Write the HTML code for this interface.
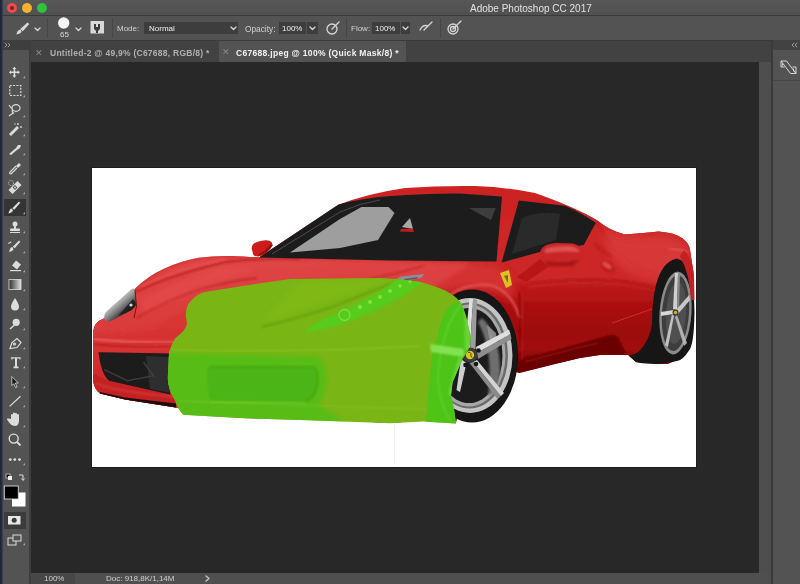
<!DOCTYPE html>
<html><head><meta charset="utf-8">
<style>
*{margin:0;padding:0;box-sizing:border-box}
html,body{width:800px;height:584px;overflow:hidden;background:#282828;font-family:"Liberation Sans",sans-serif}
.a{position:absolute}
.t{position:absolute;white-space:nowrap;line-height:1;will-change:transform}
</style></head><body>
<!-- title bar -->
<div class="a" style="left:0;top:0;width:800px;height:15px;background:linear-gradient(#575757,#505050)"></div>
<div class="a" style="left:0;top:15px;width:800px;height:1px;background:#3a3a3a"></div>
<div class="a" style="left:7px;top:3px;width:10px;height:10px;border-radius:50%;background:#ee4a52"></div>
<div class="a" style="left:22px;top:3px;width:10px;height:10px;border-radius:50%;background:#f2b230"></div>
<div class="a" style="left:37px;top:3px;width:10px;height:10px;border-radius:50%;background:#2ec23f"></div>
<div class="a" style="left:10px;top:6px;width:4px;height:4px;border-radius:50%;background:#8a1a20"></div>
<div class="t" style="left:470px;top:4px;font-size:10px;color:#e2e2e2">Adobe Photoshop CC 2017</div>
<!-- options bar -->
<div class="a" style="left:0;top:16px;width:800px;height:24px;background:#535353"></div>
<div class="a" style="left:47px;top:18px;width:1px;height:20px;background:#464646"></div>
<div class="a" style="left:112px;top:18px;width:1px;height:20px;background:#464646"></div>
<div class="a" style="left:346px;top:18px;width:1px;height:20px;background:#464646"></div>
<div class="a" style="left:440px;top:18px;width:1px;height:20px;background:#464646"></div>
<div class="a" style="left:144px;top:22px;width:94px;height:12px;background:#3d3d3d"></div>
<div class="a" style="left:279px;top:22px;width:39px;height:12px;background:#3d3d3d"></div>
<div class="a" style="left:306px;top:22px;width:1px;height:12px;background:#535353"></div>
<div class="a" style="left:372px;top:22px;width:38px;height:12px;background:#3d3d3d"></div>
<div class="a" style="left:400px;top:22px;width:1px;height:12px;background:#535353"></div>
<div class="t" style="left:117px;top:25px;font-size:8px;color:#d0d0d0">Mode:</div>
<div class="t" style="left:149px;top:25px;font-size:8px;color:#f0f0f0">Normal</div>
<div class="t" style="left:245px;top:25px;font-size:8.3px;color:#d0d0d0">Opacity:</div>
<div class="t" style="left:282px;top:25px;font-size:8px;color:#f0f0f0">100%</div>
<div class="t" style="left:351px;top:25px;font-size:8px;color:#d0d0d0">Flow:</div>
<div class="t" style="left:375px;top:25px;font-size:8px;color:#f0f0f0">100%</div>
<div class="t" style="left:59.5px;top:31px;font-size:8px;color:#d8d8d8">65</div>
<!-- tab bar -->
<div class="a" style="left:0;top:40px;width:800px;height:22px;background:#424242"></div>
<div class="a" style="left:0;top:40px;width:800px;height:1px;background:#3a3a3a"></div>
<div class="a" style="left:219px;top:41px;width:187px;height:21px;background:#535353"></div>
<div class="t" style="left:35px;top:49px;font-size:9px;color:#8a8a8a">✕</div>
<div class="t" style="left:50px;top:49px;font-size:8.5px;letter-spacing:0.25px;color:#b0b0b0;font-weight:bold">Untitled-2 @ 49,9% (C67688, RGB/8) *</div>
<div class="t" style="left:222px;top:48px;font-size:9px;color:#8a8a8a">✕</div>
<div class="t" style="left:236px;top:48.5px;font-size:8.5px;letter-spacing:0.3px;color:#f2f2f2;font-weight:bold">C67688.jpeg @ 100% (Quick Mask/8) *</div>
<!-- toolbar -->
<div class="a" style="left:0;top:40px;width:31px;height:544px;background:#3e3e3e"></div>
<div class="a" style="left:1px;top:50px;width:28px;height:534px;background:#535353"></div>
<div class="a" style="left:0;top:0;width:3px;height:584px;background:linear-gradient(90deg,#1c2234,#2a3040 60%,#404652)"></div>
<div class="a" style="left:4px;top:199px;width:22px;height:17px;background:#343434"></div>
<div class="a" style="left:4px;top:512px;width:22px;height:17px;background:#3c3c3c"></div>
<!-- canvas -->
<div class="a" style="left:31px;top:62px;width:728px;height:511px;background:#282828"></div>
<div class="a" style="left:759px;top:62px;width:12px;height:511px;background:#4e4e4e"></div>
<div class="a" style="left:771px;top:40px;width:2px;height:544px;background:#3a3a3a"></div>
<div class="a" style="left:773px;top:40px;width:27px;height:544px;background:#535353"></div>
<div class="a" style="left:773px;top:40px;width:27px;height:10px;background:#424242"></div>
<div class="a" style="left:773px;top:80px;width:27px;height:1px;background:#464646"></div>
<!-- status bar -->
<div class="a" style="left:31px;top:573px;width:740px;height:11px;background:#4f4f4f"></div>
<div class="a" style="left:31px;top:573px;width:44px;height:11px;background:#474747"></div>
<div class="t" style="left:44px;top:575px;font-size:8px;color:#d0d0d0">100%</div>
<div class="t" style="left:106px;top:575px;font-size:8px;color:#d0d0d0">Doc: 918,8K/1,14M</div>
<!-- image frame -->
<div class="a" style="left:91px;top:167px;width:606px;height:301px;background:#1c1c1c"></div>
<svg class="a" style="left:0;top:0" width="800" height="584" viewBox="0 0 800 584">
<g fill="none" stroke="#d6d6d6" stroke-width="1.3" stroke-linecap="round" stroke-linejoin="round">
 <!-- options chevrons -->
 <path d="M35 28l2.5 2.5l2.5-2.5M76 28l2.5 2.5l2.5-2.5M231 27l2.5 2.5l2.5-2.5M310 27l2.5 2.5l2.5-2.5M403 27l2.5 2.5l2.5-2.5"/>
 <!-- airbrush icons -->
 <circle cx="332" cy="29" r="5"/><path d="M332 29l7-7"/>
 <path d="M420 30q3-6 8-4M424 30l8-8"/>
 <circle cx="453" cy="29" r="5"/><circle cx="453" cy="29" r="2.5"/><path d="M453 29l8-8"/>
 <!-- tabs >> -->
 <path d="M5 43l2 2l-2 2M8 43l2 2l-2 2M794 43l-2 2l2 2M797 43l-2 2l2 2" stroke="#9a9a9a" stroke-width="1"/>
 <!-- status > -->
 <path d="M206 576l3 2.5l-3 2.5" stroke="#c8c8c8"/>
</g>
<g fill="#d8d8d8">
 <!-- options brush icon -->
 <path d="M27.5 22.5l1.8 1.6l-6.5 7.2l-2.6-2.2z"/><path d="M20.5 29.5q-2.5 0-3.3 2.5l-.8 2.6q3.2-.2 5.3-2.6z"/>
 <circle cx="63.7" cy="23" r="5.7" fill="#f4f4f4"/>
 <rect x="90.5" y="21" width="13.5" height="12.5"/>
</g>
<g fill="#3c3c3c"><path d="M94 24h2v3h2v-3h2v5l-2 2v2h-2v-2l-2-2z"/></g>
<!-- toolbar icons -->
<g fill="#dcdcdc" stroke="none">
 <!-- move -->
 <path d="M14.4 66.8l2 2.2h-1.2v2.5h2.5v-1.2l2.2 2l-2.2 2v-1.2h-2.5v2.5h1.2l-2 2.2l-2-2.2h1.2v-2.5h-2.5v1.2l-2.2-2l2.2-2v1.2h2.5v-2.5h-1.2z"/>
 <!-- wand -->
 <path d="M9 134l8-8l2 2l-8 8z"/><circle cx="18" cy="124" r="0.9"/><circle cx="21" cy="127" r="0.9"/><circle cx="15" cy="124" r="0.7"/>
 <!-- pipette 1 -->
 <path d="M9 154l7-6l2-3l3 0l-1 3l-3 2l-6 5z"/>
 <!-- eyedropper -->
 <path d="M16 166l3-3l2 2l-3 3z"/>
 <!-- bandage -->
 <path d="M8.5 190l9-9l4 4l-9 9z"/><path d="M12.6 187.5l2.4-2.4l2.4 2.4l-2.4 2.4z" fill="#535353"/><circle cx="15" cy="187.5" r="0.9"/>
 <!-- brush active -->
 <path d="M19 201.5l1.3 1.2l-6 7l-2-1.5z"/><path d="M12 208.5q-2 0-2.5 2l-1.2 3q3-.5 4.7-2.5z"/>
 <!-- stamp -->
 <circle cx="15" cy="224" r="2.5"/><rect x="14" y="225" width="2" height="4"/><rect x="10" y="228.5" width="10" height="2.5" rx="1"/><rect x="10" y="232" width="10" height="1"/>
 <!-- history brush -->
 <path d="M19 240.5l1.3 1.2l-5.5 6.5l-2-1.5z"/><path d="M12.5 247q-2 0-2.5 2l-1 3q3-.5 4.5-2.5z"/><path d="M8 243l3-1.5l.5 1l-3 1.5z"/>
 <!-- eraser -->
 <path d="M16 260.5l5 4l-4 5l-5-4z"/><rect x="10" y="270" width="11" height="1.2"/>
 <!-- drop -->
 <path d="M15 298q-4 6-4 8.5a4 4 0 0 0 8 0q0-2.5-4-8.5z"/>
 <!-- dodge -->
 <circle cx="16.2" cy="322.3" r="3.6"/><path d="M9.5 328.5l4.5-4l1 1l-4.5 4z"/>
 <!-- T -->
 <path d="M11 357.2h9.5v2.2h-1v-1h-2.5v8h1.5v1.8h-5v-1.8h1.5v-8h-2.5v1h-1z"/>
 <!-- arrow -->
 <path d="M11.8 376.5l6.5 6.5h-3l1.8 4l-1.5.7l-1.8-4l-2 2z" fill="#1a1a1a" stroke="#dcdcdc" stroke-width="0.8"/>
 <!-- hand -->
 <path d="M11 419v-4a1 1 0 0 1 2 0v3v-4.5a1 1 0 0 1 2 0v4.5v-4a1 1 0 0 1 2 0v4v-3a1 1 0 0 1 2 0v6q0 5-4.5 5q-3 0-5-3l-2.5-3.5a1 1 0 0 1 1.5-1z"/>
 <!-- dots -->
 <circle cx="10.3" cy="459.6" r="1.4"/><circle cx="14.8" cy="459.6" r="1.4"/><circle cx="19.5" cy="459.6" r="1.4"/>
 <!-- small triangles -->
 <path d="M25 76v2.2h-2.2zM25 95v2.2h-2.2zM25 115v2.2h-2.2zM25 134v2.2h-2.2zM25 153v2.2h-2.2zM25 173v2.2h-2.2zM25 192v2.2h-2.2zM25 212v2.2h-2.2zM25 231v2.2h-2.2zM25 251v2.2h-2.2zM25 270v2.2h-2.2zM25 289v2.2h-2.2zM25 308v2.2h-2.2zM25 328v2.2h-2.2zM25 347v2.2h-2.2zM25 366v2.2h-2.2zM25 386v2.2h-2.2zM25 405v2.2h-2.2zM25 425v2.2h-2.2zM25 463v2.2h-2.2zM25 543v2.2h-2.2z" fill="#a8a8a8"/>
</g>
<g fill="none" stroke="#dcdcdc" stroke-width="1.2">
 <!-- marquee -->
 <rect x="9.8" y="85.5" width="11" height="10" stroke-dasharray="2 1.3"/>
 <!-- lasso -->
 <ellipse cx="16" cy="108" rx="4" ry="3.3"/><path d="M12.5 110q-1 2 1 3q-2 1-4.5 3M9 105l3 4"/>
 <!-- eyedropper tube -->
 <path d="M16 166l-6 6q-1 2 1 2l6-6"/>
 <!-- bandage circle -->
 <circle cx="11" cy="183" r="2.5" stroke-dasharray="1 1" stroke-width="0.8"/>
 <!-- pen -->
 <path d="M10 348.5l2-6l5-4l4 4l-4 5z"/><circle cx="14.5" cy="344" r="1"/>
 <!-- line -->
 <path d="M9.6 406.4l10.9-10.2"/>
 <!-- zoom -->
 <circle cx="13.7" cy="438.6" r="4.5" stroke-width="1.4"/><path d="M17 442l3.5 3.5" stroke-width="1.8"/>
 <!-- swap arrow -->
 <path d="M19 475h4v5M21.5 478.5l1.5 2l1.5-2" stroke-width="1"/>
 <!-- screen mode -->
 <rect x="8" y="538" width="8" height="7" stroke-width="1"/><rect x="13" y="535" width="8" height="6" stroke-width="1" fill="#535353"/>
</g>
<!-- gradient tool -->
<defs><linearGradient id="gt" x1="0" x2="1"><stop offset="0" stop-color="#303030"/><stop offset="1" stop-color="#e0e0e0"/></linearGradient></defs>
<rect x="9" y="279.5" width="12" height="10" fill="url(#gt)" stroke="#dcdcdc" stroke-width="0.8"/>
<!-- default colors -->
<rect x="6" y="474" width="4" height="4" fill="#111" stroke="#ddd" stroke-width="0.7"/><rect x="8" y="476" width="4" height="4" fill="#eee"/>
<!-- fg/bg -->
<rect x="12" y="492.5" width="13.5" height="14" fill="#fff"/>
<rect x="4.3" y="486" width="14" height="13" fill="#000" stroke="#d8d8d8" stroke-width="0.9"/>
<!-- quick mask -->
<rect x="8" y="516" width="12.5" height="8.5" fill="#e8e8e8"/><circle cx="14.2" cy="520.3" r="2.5" fill="#3c3c3c"/>
<!-- right panel icon -->
<g fill="none" stroke="#d8d8d8" stroke-width="1">
 <path d="M781 61h5.5l9.5 12.5h-5.5z"/><path d="M781 61v6h3.5"/><path d="M796 73.5v-6.5h-3.5"/><path d="M782.5 63.5v2.5M793.5 68.5v3" stroke-width="0.8"/>
</g>
<!-- IMAGE -->
<rect x="92" y="168" width="604" height="299" fill="#fff"/>
<rect x="394" y="424" width="1" height="41" fill="#f0f0f0"/>
<filter id="soft" x="80" y="160" width="630" height="320" filterUnits="userSpaceOnUse"><feGaussianBlur stdDeviation="0.45"/></filter><g id="car" filter="url(#soft)"><defs>
 <linearGradient id="doorG" gradientUnits="userSpaceOnUse" x1="0" y1="255" x2="0" y2="380">
  <stop offset="0" stop-color="#cc2424"/>
  <stop offset="0.22" stop-color="#c01c1c"/>
  <stop offset="0.4" stop-color="#ac1010"/>
  <stop offset="0.62" stop-color="#9c0808"/>
  <stop offset="0.75" stop-color="#a20c0c"/>
  <stop offset="0.85" stop-color="#7c0202"/>
  <stop offset="1" stop-color="#6a0000"/>
 </linearGradient>
 <linearGradient id="bumpG" x1="0" y1="0" x2="0" y2="1">
  <stop offset="0" stop-color="#dc3a3a"/>
  <stop offset="0.5" stop-color="#d42e2e"/>
  <stop offset="1" stop-color="#c42222"/>
 </linearGradient>
 <linearGradient id="hoodG" x1="0" y1="0" x2="0.3" y2="1">
  <stop offset="0" stop-color="#e24848"/>
  <stop offset="1" stop-color="#d83838"/>
 </linearGradient>
 <linearGradient id="rimRing" x1="0" y1="0" x2="1" y2="1">
  <stop offset="0" stop-color="#d8d8d8"/>
  <stop offset="0.5" stop-color="#a0a0a0"/>
  <stop offset="1" stop-color="#d0d0d0"/>
 </linearGradient>
 <linearGradient id="spokeG" x1="0" y1="0" x2="1" y2="0">
  <stop offset="0" stop-color="#dcdcdc"/>
  <stop offset="1" stop-color="#909090"/>
 </linearGradient>
 <filter id="bl1" x="-20%" y="-20%" width="140%" height="140%"><feGaussianBlur stdDeviation="1"/></filter>
 <filter id="bl2" x="-20%" y="-20%" width="140%" height="140%"><feGaussianBlur stdDeviation="2.5"/></filter>
 <filter id="bl3" x="-30%" y="-30%" width="160%" height="160%"><feGaussianBlur stdDeviation="5"/></filter>
 <clipPath id="bodyClip"><path id="bodyPath" d="M93 387 L93 332 Q94 322 104 318.6 L134.7 289 Q148 276 164 268.8 Q180 261 198.5 257.7 Q215 255.5 232.7 256 L259 257.5 L338 205 Q365 194 405 188 Q440 185.5 475 186 Q505 187 535 193 Q575 207 597 220.3 Q610 231 625 234.5 Q645 233 658.6 231.6 Q675 233 682 238 Q689 243 690 250 L693.3 271.4 L694 300 L693.3 322.8 L690 347 Q682 360 667.7 364 L658 364 L636 362 L628 355 L600 355 L580 358 L555 364 L519 373 L470 356 L456 423 L423 420.3 L390 422.9 L317 419 L240 418 L176 407.5 L125 399.5 L100 393.5 Q94 389 93 380 Z"/></clipPath>
</defs>
<g clip-path="url(#bodyClip)">
 <rect x="90" y="180" width="610" height="250" fill="url(#doorG)"/>
 <!-- upper band: cowl/fender/door top/haunch brighter -->
 <path fill="#cc2626" filter="url(#bl2)" d="M240 250 L700 200 L700 290 Q640 282 600 280 Q560 281 530 284 L480 272 L240 275 Z"/>
 <!-- rear haunch top highlight -->
 <path fill="#d23232" filter="url(#bl3)" d="M605 236 Q630 240 655 236 Q680 236 690 250 L690 275 Q660 268 630 262 L612 252 Z" opacity="0.8"/>
 <!-- buttress shadow line -->
 <path fill="none" stroke="#b01818" stroke-width="1.5" filter="url(#bl1)" d="M597 222 Q610 250 640 268 L690 282"/>
 <!-- door crease -->
 <path fill="none" stroke="#a81414" stroke-width="1.4" filter="url(#bl1)" d="M528 284 Q570 278 615 281 Q640 283 660 289"/>
 <path fill="none" stroke="#d43a3a" stroke-width="1" filter="url(#bl1)" d="M528 287 Q570 281 615 284 Q640 286 660 292" opacity="0.7"/>
 <!-- fender above front wheel lighter -->
 <path fill="#d63434" filter="url(#bl3)" d="M405 275 Q430 262 470 262 Q500 264 512 280 L515 300 Q490 285 460 290 Q430 295 410 300 Z" opacity="0.9"/>
 <!-- front bumper -->
 <path fill="url(#bumpG)" filter="url(#bl3)" d="M80 300 L300 290 L420 300 L440 430 L80 430 Z"/>
 <!-- hood -->
 <path fill="url(#hoodG)" filter="url(#bl2)" d="M90 320 L134.7 289 Q148 276 164 268.8 Q180 261 198.5 257.7 Q215 255.5 232.7 256 L259 257.5 L400 260 L470 264 L430 290 L200 300 L150 330 L92 336 Z"/>
 <!-- hood crease subtle -->
 <path fill="none" stroke="#b41e1e" stroke-width="1.3" filter="url(#bl1)" d="M136 292 Q170 275 226 262 Q260 258 300 259"/>
 <path fill="none" stroke="#ee6060" stroke-width="1.5" filter="url(#bl1)" d="M138 288 Q170 271 226 259" opacity="0.6"/>
 <path fill="none" stroke="#b82222" stroke-width="1.4" filter="url(#bl1)" d="M137 318 Q165 300 200 289 Q230 281 257 278"/>
 <path fill="#e44c4c" filter="url(#bl2)" d="M140 300 Q170 282 226 266 L257 270 Q215 282 180 296 L142 314 Z" opacity="0.7"/>
 <!-- bumper crease highlight -->
 <path fill="none" stroke="#f07070" stroke-width="1.3" filter="url(#bl1)" d="M94 339 Q130 343 180 342"/>
 <path fill="none" stroke="#b81c1c" stroke-width="1.3" filter="url(#bl1)" d="M94 344 Q130 348 180 347"/>
 <path fill="none" stroke="#e45454" stroke-width="2" filter="url(#bl1)" d="M448 296 Q470 281 494 286 Q512 293 520 318"/>
 <path fill="#d83a3a" filter="url(#bl3)" d="M600 228 Q640 240 665 236 Q686 240 690 258 L688 290 Q650 280 625 272 L610 258 Z" opacity="0.85"/>
 <path fill="none" stroke="#b41a1a" stroke-width="1.3" filter="url(#bl1)" d="M594 244 Q603 251 612 257"/>
 <path fill="none" stroke="#ee6a6a" stroke-width="1.2" filter="url(#bl1)" d="M668 249 Q678 248 688 252" opacity="0.8"/>
 <path fill="none" stroke="#8a0808" stroke-width="1.2" filter="url(#bl1)" d="M519 292 Q521 330 519 368"/>
 <path fill="none" stroke="#d03030" stroke-width="1" filter="url(#bl1)" d="M522 292 Q524 330 522 366" opacity="0.7"/>
 <path fill="none" stroke="#d84848" stroke-width="0.8" d="M612 323 L652 309" opacity="0.8"/>
 <!-- rocker sill darker -->
 <path fill="#6a0202" filter="url(#bl1)" d="M515 362 L560 349 L600 338 L612 335 L618 337 L626 354 L600 356 L555 365 L519 375 Z"/>
 <path fill="none" stroke="#b82a2a" stroke-width="1" filter="url(#bl1)" d="M525 362 Q560 352 598 343" opacity="0.8"/>
 <!-- lower lip red bottom -->
 <path fill="#c42222" d="M90 372 L108.5 381 L172 394 L178 412 L90 412 Z"/>
</g>
<!-- windshield -->
<path fill="#1f1f1f" d="M259 257.5 L338.5 204.5 Q362 198 390 196 Q430 193 460 193.5 L502 196.5 L496.5 261.5 L390 260.5 Z"/><path fill="none" stroke="#4a4a4a" stroke-width="1" d="M272 254 L340 212 Q360 203 380 200"/>
<path fill="#9e9e9e" d="M290 252.5 L340 219 L361.5 207 L388.5 207 L394.5 213 L378 240 L340 248 Z"/>
<path fill="#3c3c3c" d="M469 208 L495.6 208 L491 220.3 Z"/>
<path fill="#a8a8a8" d="M402 227 L410 218 L413 229 Z"/><path fill="#c41c1c" d="M401 229 L413 228.5 L414 232 L400 231.5 Z"/>
<!-- side window -->
<path fill="#1e1e1e" d="M518.8 200.5 L565 205.7 Q582 213 595.8 222.8 L583.8 245 L540 252 L501.6 262.5 Z"/>
<path fill="#2e2e2e" d="M522 218 Q540 210 560 214 L556 240 L512 254 Z" opacity="0.7"/>
<!-- mirrors -->
<path fill="#cc1c1c" d="M251.7 248.4 Q252 244 255.3 242.8 Q260 240.5 265.5 240.2 Q270 240 271.7 242.3 L272.7 245.3 Q270 250 266.5 252.5 Q262 256 258.3 256.6 Q254 256.5 253.2 254.6 Z"/><path fill="#8a0c0c" d="M272.7 245.3 Q270 250 266.5 252.5 Q262 256 258.3 256.6 L259 254 Q266 250 271 244 Z" opacity="0.7"/>
<path fill="#b81818" d="M517 277 L544 256 L556 262 L526 282 Z"/>
<path fill="#c82626" d="M540 253 Q541 244 556 243 L573 243.5 Q583 245.5 582.5 255 Q581.5 265 570 266.5 L550 266 Q539 263 540 253 Z"/>
<path fill="#e45a5a" filter="url(#bl1)" d="M545 249 Q552 245.5 571 246 Q579 248 580 252 Q560 250.5 545 253 Z" opacity="0.85"/>
<path fill="#9a0e0e" filter="url(#bl1)" d="M544 261 Q560 265 579 260 L572 266 L550 266 Z" opacity="0.8"/>
<!-- side intake nub -->
<ellipse cx="608" cy="267" rx="7.5" ry="4.5" fill="#b81c1c" transform="rotate(35 608 267)" filter="url(#bl1)"/><ellipse cx="607" cy="265.5" rx="5.5" ry="2.5" fill="#e25a5a" transform="rotate(35 607 265.5)" filter="url(#bl1)" opacity="0.85"/>
<!-- front wheel -->
<ellipse cx="472" cy="356" rx="46" ry="66.5" fill="#121212"/>
<ellipse cx="470" cy="355.5" rx="42.5" ry="57.5" fill="#c4c4c4"/>
<ellipse cx="469.5" cy="355.5" rx="38.5" ry="53" fill="#6a6a6a"/>
<ellipse cx="469" cy="355.5" rx="36.5" ry="51" fill="#a8a8a8"/>
<ellipse cx="469" cy="355.5" rx="33.5" ry="47.5" fill="#1c1c1c"/>
<path fill="#6e6e6e" filter="url(#bl1)" d="M482 318 Q500 335 500 372 Q498 392 488 396 Q494 352 478 322 Z"/>
<path fill="#9a9a9a" d="M487 325 L496 333 L497 345 L489 338 Z" opacity="0.8"/>
<g>
 <path fill="#e0e0e0" d="M464.5 348 L469.5 299 L473 299 L470 349 Z"/>
 <path fill="#9c9c9c" d="M470 349 L473 299 L477 300 L475.5 349 Z"/>
 <path fill="#dedede" d="M476 347 L509 329.5 L510.5 334 L477 353 Z"/>
 <path fill="#8e8e8e" d="M477 353 L510.5 334 L511.5 339 L478 359 Z"/>
 <path fill="#d4d4d4" d="M477 360 L504 393 L501 396 L473 362 Z"/>
 <path fill="#8a8a8a" d="M473 362 L501 396 L497.5 399 L469.5 363 Z"/>
 <path fill="#d0d0d0" d="M466.5 363 L460 392 L456.5 390 L461 359 Z"/>
 <path fill="#cfcfcf" d="M463 351 L431 343 L431 350 L463 358 Z"/>
</g>
<circle cx="470" cy="355" r="7.5" fill="#3a3a3a"/>
<circle cx="470" cy="355" r="4.2" fill="#dcc21e"/>
<path d="M468 352.5 q2 -1 3 1 q-1 2 1 4" fill="none" stroke="#222" stroke-width="0.8"/>
<circle cx="478.5" cy="350.5" r="2.3" fill="#151515"/><circle cx="476" cy="364" r="2.3" fill="#151515"/><circle cx="465.5" cy="365" r="2.3" fill="#151515"/>
<!-- rear wheel -->
<path fill="#141414" d="M676.6 258.6 Q694 262 694.5 312 Q694 345 689 350.4 Q683 360 677 361 L658 364 Q644 364 636.4 362.3 L629 356 Q640 354 646 342 Q651 333 652 324 Q652 300 656 285 Q662 262 676.6 258.6 Z"/>
<ellipse cx="675.5" cy="313" rx="16" ry="41.5" fill="#8a8a8a" transform="rotate(4 675 313)"/>
<ellipse cx="675.5" cy="313" rx="13.5" ry="38" fill="#3c3c3c" transform="rotate(4 675 313)"/>
<ellipse cx="676" cy="313" rx="10" ry="31" fill="#505050" transform="rotate(4 675 313)"/>
<g>
 <path fill="#d0d0d0" d="M673 309 L675 273 L678 273 L677 310 Z"/>
 <path fill="#8a8a8a" d="M677 310 L678 273 L680 274 L679 311 Z"/>
 <path fill="#c8c8c8" d="M677 309 L689 295 L690 300 L678 314 Z"/>
 <path fill="#b0b0b0" d="M677 315 L687 343 L684 346 L675 317 Z"/>
 <path fill="#c0c0c0" d="M674 316 L668 347 L665 345 L672 314 Z"/>
 <path fill="#d8d8d8" d="M673 314 L661 316 L661 312 L674 310 Z"/>
</g>
<circle cx="675.5" cy="312.5" r="3" fill="#3a3a3a"/><circle cx="675.5" cy="312.5" r="1.8" fill="#c8b020"/>
<path fill="#c42222" d="M684 250 Q692 258 694 275 L694.5 300 L691 300 Q690 275 680 256 Z"/>
<!-- front grille -->
<path fill="#1a1a1a" d="M98.5 352.3 L170 353.5 L170 394.5 L109 380.7 Q101 374 98.5 352.3 Z"/>
<path fill="#353535" d="M146 356 L170 357 L170 393 L150 389 Z" opacity="0.8"/>
<path fill="none" stroke="#3c3c3c" stroke-width="1.6" d="M104 369.6 L127.5 380.7 L153.4 375.8 L143.5 362.2"/>
<!-- front lip splitter -->
<path fill="#1c0a0a" d="M100 392 L125 397.5 L176 403.5 L176 407.5 L125 399.5 L100 393.5 Z"/>
<path fill="none" stroke="#e86060" stroke-width="1" filter="url(#bl1)" d="M96 383 Q110 391 176 397" opacity="0.7"/>
<!-- headlight -->
<linearGradient id="hlG" gradientUnits="userSpaceOnUse" x1="112" y1="300" x2="125" y2="315"><stop offset="0" stop-color="#e8e8e8"/><stop offset="0.5" stop-color="#8a8a8a"/><stop offset="1" stop-color="#1e1e1e"/></linearGradient>
<path fill="url(#hlG)" d="M104.5 319 Q103 314 108 310 L131 289.5 Q134 287.5 135 290 L136 305 Q133 310 128 312 L111 321 Q106 322.5 104.5 319 Z"/>
<path fill="#1a1a1a" d="M118 316 L133 299 L136 303 Q133 309 127 312 Z" opacity="0.8"/>
<circle cx="131" cy="305" r="1.6" fill="#d8d8d8"/>
<path fill="none" stroke="#7a1010" stroke-width="1" d="M135 290 L136.5 306 L134 318"/>
<!-- headlight chrome on right -->
<path fill="#8e8e98" d="M396 279.5 L401 276.5 L424 274 L422 277.5 L410 280 L398 281.5 Z"/><path fill="#444" d="M404 279 L418 277 L417 278.5 L405 280.5 Z" opacity="0.7"/><path fill="none" stroke="#b02020" stroke-width="1.2" filter="url(#bl1)" d="M340 285 Q380 278 424 266"/>
<!-- badge -->
<path fill="#e0c020" d="M500 273 L509 270 L512 285 L506 288 Z"/>
<path fill="#333" d="M504 276 L508 275 L508 283 Z" opacity="0.6"/>
<!-- green mask -->
<clipPath id="gClip"><path d="M255 284.1 L290 279 L380 278 L400 279.3 L420.5 281.9 Q436 286 446.2 291.1 Q455 296 459.5 301 Q464 308 466.7 319.3 L470.4 336 Q471 345 467 352 L463 357.8 L452.5 382.5 L451 395.6 L453.9 408.6 L456 423.5 L423 421.5 L390 423.2 L317 420.5 L240 418 L183.3 414.8 Q177 408 175.5 401 Q168 390 167.8 378 L169 352.2 Q172 343 175.5 338 Q186 330 187 324 L185.8 315 Q186 305 191 300.8 Q198 293 206.4 291.8 Z"/></clipPath>
<g clip-path="url(#gClip)">
 <rect x="160" y="270" width="320" height="160" fill="#7ab514"/>
 <!-- lower bumper tint -->
 <path fill="#58bc16" filter="url(#bl2)" d="M160 353 L318 356 Q328 365 326 385 Q324 400 318 404 L330 412 L350 425 L160 425 Z"/>
 <!-- darker grille -->
 <path fill="#4cb412" filter="url(#bl1)" d="M208 366 L314 366.5 Q320 370 318 386 Q315 399 306 401.5 L210 400 Q206 385 208 366 Z"/>
 <path fill="none" stroke="#44a010" stroke-width="1.2" filter="url(#bl1)" d="M210 367 L314 367 Q319 372 317 386 Q314 399 306 401" opacity="0.8"/>
 <path fill="none" stroke="#84d84a" stroke-width="1" filter="url(#bl1)" d="M210 402 L306 403.5" opacity="0.6"/>
 <!-- bumper crease light -->
 <path fill="none" stroke="#94d040" stroke-width="1.2" opacity="0.7" filter="url(#bl1)" d="M172 350 Q300 353 420 346"/>
 <path fill="none" stroke="#94d040" stroke-width="1" opacity="0.5" filter="url(#bl1)" d="M180 401 Q300 405 440 410"/>
 <!-- hood crease dark green wedge -->
 <path fill="none" stroke="#5e9c0e" stroke-width="1.6" filter="url(#bl1)" d="M262 327 Q300 318 335 306 Q370 292 400 280" opacity="0.9"/>
 <path fill="#84bc1c" filter="url(#bl2)" d="M262 322 Q320 305 392 279 L300 281 Z" opacity="0.6"/>
 <!-- headlight strip bright green -->
 <path fill="#56cc1e" filter="url(#bl1)" d="M303 333 Q315 322 327.5 317 Q345 309 365 300 Q382 291 389.4 285 L395 279.4 L421 277.5 L426 281 L421 283 Q412 290 406 294.4 Q390 303 374.4 311 Q355 320 337 326 Z"/>
 <circle cx="344.5" cy="315" r="5.5" fill="none" stroke="#8ee04e" stroke-width="1.3" opacity="0.8"/>
 <g fill="#8ae846" opacity="0.85">
  <circle cx="360" cy="307" r="2"/><circle cx="370" cy="302" r="2"/><circle cx="380" cy="297" r="2"/><circle cx="390" cy="291" r="2"/><circle cx="400" cy="286" r="1.8"/><circle cx="410" cy="281.5" r="1.6"/>
 </g>
 <!-- over wheel bright green -->
 <path fill="#4ec418" d="M460 301 Q452 304 449.3 307 Q444 313 443 317.3 Q440 323 438 335 L433 350 Q428 385 426 425 L480 425 L480 290 Z"/>
 <path fill="none" stroke="#78dc48" stroke-width="1.2" opacity="0.6" filter="url(#bl1)" d="M462 303 Q440 330 438 380 Q440 405 450 420"/>
 <!-- spoke reflections -->
 <path fill="#8ee85a" opacity="0.85" filter="url(#bl1)" d="M430 344 L464 349 L464 357 L431 352 Z"/>
 <path fill="#7ee04a" opacity="0.6" filter="url(#bl1)" d="M464 305 L468 300 L471 350 L465 350 Z"/>
 <path fill="#7ee04a" opacity="0.6" filter="url(#bl1)" d="M462 358 L452 396 L448 394 L459 356 Z"/>
</g>
</g><!--endcar-->
</svg>
</body></html>
